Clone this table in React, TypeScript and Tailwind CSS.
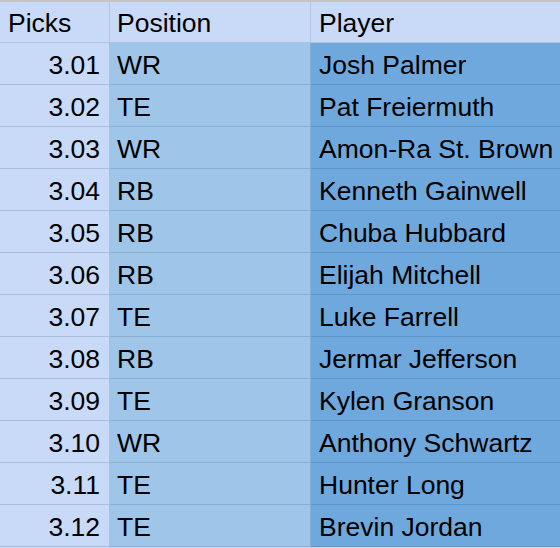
import React from 'react';

interface Pick {
  pick: string;
  pos: string;
  player: string;
}

const picks: Pick[] = [
  { pick: '3.01', pos: 'WR', player: 'Josh Palmer' },
  { pick: '3.02', pos: 'TE', player: 'Pat Freiermuth' },
  { pick: '3.03', pos: 'WR', player: 'Amon-Ra St. Brown' },
  { pick: '3.04', pos: 'RB', player: 'Kenneth Gainwell' },
  { pick: '3.05', pos: 'RB', player: 'Chuba Hubbard' },
  { pick: '3.06', pos: 'RB', player: 'Elijah Mitchell' },
  { pick: '3.07', pos: 'TE', player: 'Luke Farrell' },
  { pick: '3.08', pos: 'RB', player: 'Jermar Jefferson' },
  { pick: '3.09', pos: 'TE', player: 'Kylen Granson' },
  { pick: '3.10', pos: 'WR', player: 'Anthony Schwartz' },
  { pick: '3.11', pos: 'TE', player: 'Hunter Long' },
  { pick: '3.12', pos: 'TE', player: 'Brevin Jordan' },
];

const App: React.FC = () => {
  return (
    <div
      className="w-[560px] h-[548px] overflow-hidden bg-[#c9daf8] border-t-2 border-[#c4c4c4] text-[26.5px] leading-none text-black"
      style={{ fontFamily: '"Liberation Sans", Arial, sans-serif' }}
    >
      {/* Header */}
      <div className="flex h-[41px] border-b border-[#aec2e2]">
        <div className="w-[110px] border-r border-[#b3c6e6] flex items-center pl-[8px] pt-[2px]">Picks</div>
        <div className="w-[201px] border-r border-[#b3c6e6] flex items-center pl-[7px] pt-[2px]">Position</div>
        <div className="flex-1 flex items-center pl-[8px] pt-[2px]">Player</div>
      </div>

      {picks.map((p) => (
        <div key={p.pick} className="flex h-[42px]">
          <div className="w-[110px] bg-[#c9daf8] border-b border-r border-[#a9bedc] flex items-center justify-end pr-[9px] pt-[4px]">
            {p.pick}
          </div>
          <div className="w-[201px] bg-[#9fc5e8] border-b border-r border-[#86b0d6] flex items-center pl-[7px] pt-[4px]">
            {p.pos}
          </div>
          <div className="flex-1 bg-[#6fa8dc] border-b border-[#5c95cb] flex items-center pl-[8px] pt-[4px]">
            {p.player}
          </div>
        </div>
      ))}
    </div>
  );
};

export default App;
